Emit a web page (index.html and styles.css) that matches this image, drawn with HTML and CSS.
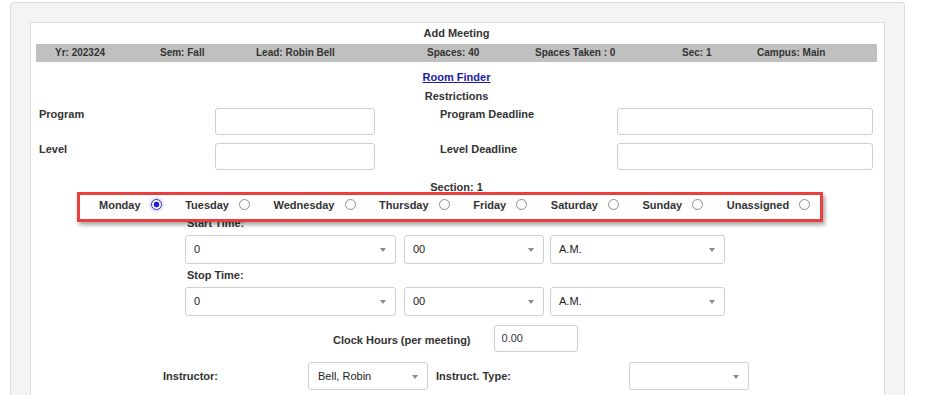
FILE: index.html
```html
<!DOCTYPE html>
<html lang="en">
<head>
<meta charset="utf-8">
<title>Add Meeting</title>
<link rel="stylesheet" href="styles.css">
</head>
<body>
<div class="outer">
  <div class="inner">
    <div class="title">Add Meeting</div>
    <div class="infobar">
      <span>Yr: 202324</span>
      <span>Sem: Fall</span>
      <span>Lead: Robin Bell</span>
      <span>Spaces: 40</span>
      <span>Spaces Taken : 0</span>
      <span>Sec: 1</span>
      <span>Campus: Main</span>
    </div>
    <div class="center link-row"><a href="#" class="link">Room Finder</a></div>
    <div class="center heading">Restrictions</div>
    <div class="restrict">
      <label class="lbl">Program</label>
      <input class="txt" type="text">
      <span></span>
      <label class="lbl">Program Deadline</label>
      <input class="txt" type="text">
      <label class="lbl">Level</label>
      <input class="txt" type="text">
      <span></span>
      <label class="lbl">Level Deadline</label>
      <input class="txt" type="text">
    </div>
    <div class="center section">Section: 1</div>
    <div class="days">
      <label class="day">Monday <input type="radio" name="day" class="radio" checked></label>
      <label class="day">Tuesday <input type="radio" name="day" class="radio"></label>
      <label class="day">Wednesday <input type="radio" name="day" class="radio"></label>
      <label class="day">Thursday <input type="radio" name="day" class="radio"></label>
      <label class="day">Friday <input type="radio" name="day" class="radio"></label>
      <label class="day">Saturday <input type="radio" name="day" class="radio"></label>
      <label class="day">Sunday <input type="radio" name="day" class="radio"></label>
      <label class="day">Unassigned <input type="radio" name="day" class="radio"></label>
    </div>
    <div class="times">
      <div class="time-label start-label">Start Time:</div>
      <div class="time-row">
        <div class="sel w-hour">0</div>
        <div class="sel w-min">00</div>
        <div class="sel w-ampm">A.M.</div>
      </div>
      <div class="time-label stop-label">Stop Time:</div>
      <div class="time-row">
        <div class="sel w-hour">0</div>
        <div class="sel w-min">00</div>
        <div class="sel w-ampm">A.M.</div>
      </div>
    </div>
    <div class="clock-row">
      <span class="lbl clock-lbl">Clock Hours (per meeting)</span>
      <input class="txt clock" type="text" value="0.00">
    </div>
    <div class="instr-row">
      <span class="lbl instr-lbl">Instructor:</span>
      <div class="sel w-instr">Bell, Robin</div>
      <span class="lbl type-lbl">Instruct. Type:</span>
      <div class="sel w-instr"></div>
    </div>
  </div>
</div>
</body>
</html>
```
FILE: styles.css
```css
html, body {
  margin: 0;
  padding: 0;
  background: #fff;
  font-family: "Liberation Sans", Arial, sans-serif;
  color: #333;
  overflow: hidden;
}

.outer {
  margin: 2px 21px 0 10px;
  padding: 19px 19px 0 19px;
  background: #f4f4f4;
  border: 1px solid #dcdcdc;
  border-bottom: none;
  border-radius: 4px 4px 0 0;
  height: 420px;
}

.inner {
  background: #fff;
  border: 1px solid #dcdcdc;
  border-bottom: none;
  padding: 0 7px 0 5px;
  height: 420px;
}

.title {
  text-align: center;
  font-size: 11px;
  font-weight: bold;
  line-height: 21px;
}

.infobar {
  display: grid;
  grid-template-columns: 105px 96px 171px 108px 147px 75px auto;
  background: #c0c0c0;
  height: 18px;
  line-height: 18px;
  padding-left: 19px;
  font-size: 10px;
  font-weight: bold;
  color: #333;
}

.center {
  text-align: center;
  font-size: 11px;
  font-weight: bold;
  line-height: 14px;
}

.link-row { margin-top: 8px; }

.link {
  color: #1a1aa6;
  text-decoration: underline;
}

.heading { margin-top: 5px; }

.lbl {
  font-size: 11px;
  font-weight: bold;
  line-height: 13px;
  color: #333;
}

.restrict {
  display: grid;
  grid-template-columns: 176px 160px 65px 177px 256px;
  grid-auto-rows: 27px;
  row-gap: 8px;
  margin-top: 5px;
  padding-left: 3px;
}

.restrict .lbl {
  align-self: start;
}

.txt {
  box-sizing: border-box;
  border: 1px solid #cfcfcf;
  border-radius: 3px;
  height: 27px;
  margin: 0;
  padding: 0 6px;
  font-family: "Liberation Sans", Arial, sans-serif;
  font-size: 11px;
  color: #333;
  background: #fff;
}

.section { margin-top: 10px; }

.days {
  position: relative;
  z-index: 1;
  box-sizing: border-box;
  display: flex;
  align-items: center;
  width: 746px;
  height: 30px;
  margin: -2px 0 0 41px;
  padding: 0 0 5px 19px;
  background: #fff;
  border: 3px solid #e8403f;
  box-shadow: 2px 3px 4px rgba(0, 0, 0, 0.35);
}

.day {
  display: flex;
  align-items: center;
  gap: 10px;
  margin-right: 23.6px;
  font-size: 11px;
  font-weight: bold;
  color: #333;
}

.radio {
  appearance: none;
  -webkit-appearance: none;
  box-sizing: border-box;
  width: 11px;
  height: 11px;
  margin: 0;
  border: 1px solid #8e8e8e;
  border-radius: 50%;
  background: #fff;
}

.radio:checked {
  border-color: #2b2bb8;
  background: radial-gradient(circle, #2323c8 0 2.6px, #fff 3.2px);
  box-shadow: 0 0 3px 1px rgba(90, 90, 255, 0.35);
}

.times {
  margin-left: 149px;
}

.time-label {
  font-size: 11px;
  font-weight: bold;
  line-height: 14px;
  padding-left: 2px;
}

.start-label { margin-top: -6px; }
.stop-label { margin-top: 4px; }

.time-row {
  display: flex;
  margin-top: 5px;
}

.sel {
  position: relative;
  box-sizing: border-box;
  height: 29px;
  line-height: 27px;
  padding-left: 8px;
  border: 1px solid #cfcfcf;
  border-radius: 3px;
  font-size: 11px;
  color: #222;
  background: #fff;
}

.sel::after {
  content: "";
  position: absolute;
  right: 9px;
  top: 12px;
  border-left: 3.5px solid transparent;
  border-right: 3.5px solid transparent;
  border-top: 4px solid #8a8a8a;
}

.w-hour { width: 211px; margin-right: 8px; }
.w-min { width: 140px; margin-right: 6px; }
.w-ampm { width: 175px; }

.clock-row {
  display: flex;
  align-items: center;
  gap: 23px;
  margin: 9px 0 0 297px;
}

.clock-lbl { padding-top: 3px; }

.clock {
  width: 84px;
  padding-left: 7px;
  padding-bottom: 2px;
}

.instr-row {
  display: flex;
  align-items: center;
  margin: 10px 0 0 127px;
}

.instr-lbl { width: 145px; padding-top: 1px; }
.type-lbl { width: 193px; margin-left: 8px; }

.w-instr {
  width: 120px;
  height: 28px;
  line-height: 26px;
  padding-left: 9px;
}
```
